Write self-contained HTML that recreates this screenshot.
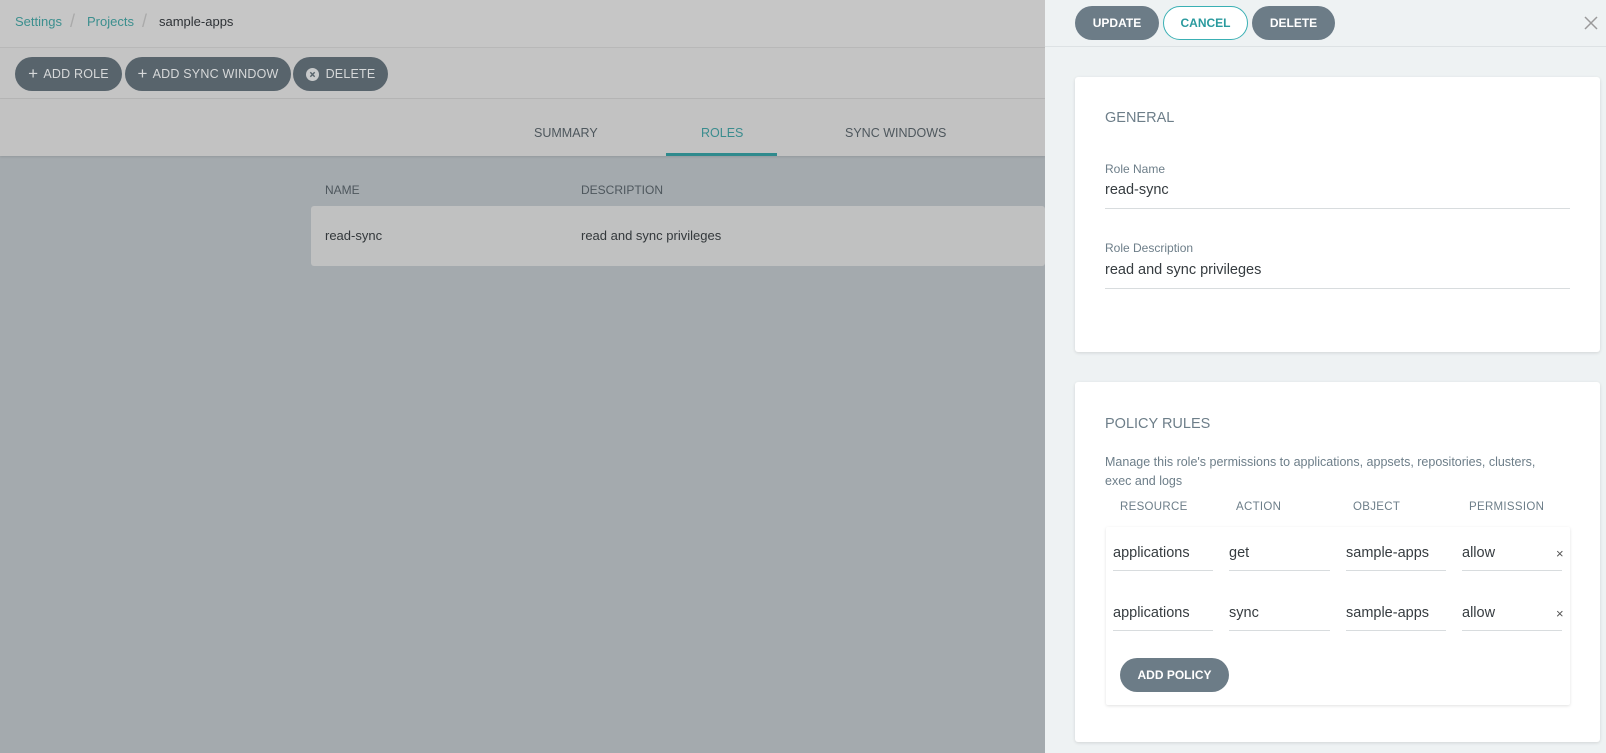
<!DOCTYPE html>
<html><head><meta charset="utf-8"><style>
*{box-sizing:border-box;margin:0;padding:0}
body{width:1606px;height:753px;overflow:hidden;position:relative;font-family:"Liberation Sans",sans-serif;background:#a4aaae}
.a{position:absolute;white-space:nowrap}
.btn{position:absolute;border-radius:17px;background:#58646c;color:#d6d8d9;font-size:12.5px;display:flex;align-items:center;justify-content:center;letter-spacing:.2px}
.rb{position:absolute;border-radius:17px;background:#6c7c87;color:#fff;font-size:12px;display:flex;align-items:center;justify-content:center;font-weight:bold}
.card{position:absolute;background:#fff;box-shadow:0 1px 3px rgba(0,0,0,.12);border-radius:3px}
.lbl{color:#6d7e89;font-size:12px}
.val{color:#363c40;font-size:14.5px}
.line{position:absolute;height:1px;background:#d8dcde}
.ch{position:absolute;font-size:11.5px;color:#6d7e89;letter-spacing:.3px}
</style></head><body>
<div class="a" style="left:0;top:0;width:1045px;height:47px;background:#c6c6c6"></div>
<div class="a" style="left:0;top:47px;width:1045px;height:1px;background:#b8b8b8"></div>
<div class="a" style="left:0;top:48px;width:1045px;height:50px;background:#c4c4c4"></div>
<div class="a" style="left:0;top:98px;width:1045px;height:1px;background:#b6b6b6"></div>
<div class="a" style="left:0;top:99px;width:1045px;height:57px;background:#c2c2c2;box-shadow:0 1px 2px rgba(0,0,0,.1)"></div>
<div class="a" style="left:15px;top:14px;font-size:13px;color:#3c8f8e">Settings</div>
<div class="a" style="left:70px;top:11px;font-size:18px;color:#aaa">/</div>
<div class="a" style="left:87px;top:14px;font-size:13px;color:#3c8f8e">Projects</div>
<div class="a" style="left:142px;top:11px;font-size:18px;color:#aaa">/</div>
<div class="a" style="left:159px;top:14px;font-size:13px;color:#2e3236">sample-apps</div>
<div class="btn" style="left:15px;top:57px;width:107px;height:34px"><span style="font-size:17px;margin-right:5px">+</span>ADD ROLE</div>
<div class="btn" style="left:125px;top:57px;width:166px;height:34px"><span style="font-size:17px;margin-right:5px">+</span>ADD SYNC WINDOW</div>
<div class="btn" style="left:293px;top:57px;width:95px;height:34px"><svg width="13" height="13" viewBox="0 0 13 13" style="margin-right:7px"><circle cx="6.5" cy="6.5" r="6.5" fill="#c8cacb"/><path d="M4.3 4.3l4.4 4.4M8.7 4.3l-4.4 4.4" stroke="#58646c" stroke-width="1.4"/></svg>DELETE</div>
<div class="a" style="left:534px;top:126px;font-size:12.5px;color:#4e575d">SUMMARY</div>
<div class="a" style="left:701px;top:126px;font-size:12.5px;color:#3a8c8e">ROLES</div>
<div class="a" style="left:845px;top:126px;font-size:12.5px;color:#4e575d">SYNC WINDOWS</div>
<div class="a" style="left:666px;top:153px;width:111px;height:3px;background:#2f8a8d"></div>
<div class="a" style="left:325px;top:183px;font-size:12px;color:#4e575d">NAME</div>
<div class="a" style="left:581px;top:183px;font-size:12px;color:#4e575d">DESCRIPTION</div>
<div class="a" style="left:311px;top:206px;width:734px;height:60px;background:#c0c1c1;border-radius:3px"></div>
<div class="a" style="left:325px;top:228px;font-size:13px;color:#33383b">read-sync</div>
<div class="a" style="left:581px;top:228px;font-size:13px;color:#33383b">read and sync privileges</div>

<div class="a" style="left:1045px;top:0;width:561px;height:753px;background:#eef2f3"></div>
<div class="a" style="left:1045px;top:46px;width:561px;height:1px;background:#dde2e4"></div>
<div class="rb" style="left:1075px;top:6px;width:84px;height:34px">UPDATE</div>
<div class="rb" style="left:1163px;top:6px;width:85px;height:34px;background:#fff;border:1px solid #3ab0b4;color:#2a9a9e">CANCEL</div>
<div class="rb" style="left:1252px;top:6px;width:83px;height:34px">DELETE</div>
<svg class="a" style="left:1584px;top:16px" width="14" height="14" viewBox="0 0 14 14"><path d="M1 1l12 12M13 1L1 13" stroke="#9a9a9a" stroke-width="1.5"/></svg>

<div class="card" style="left:1075px;top:77px;width:525px;height:275px"></div>
<div class="a" style="left:1105px;top:110px;font-size:14.5px;color:#6d7e89">GENERAL</div>
<div class="a lbl" style="left:1105px;top:162px">Role Name</div>
<div class="a val" style="left:1105px;top:182px">read-sync</div>
<div class="line" style="left:1105px;top:208px;width:465px"></div>
<div class="a lbl" style="left:1105px;top:241px">Role Description</div>
<div class="a val" style="left:1105px;top:262px">read and sync privileges</div>
<div class="line" style="left:1105px;top:288px;width:465px"></div>

<div class="card" style="left:1075px;top:382px;width:525px;height:360px"></div>
<div class="a" style="left:1105px;top:416px;font-size:14.5px;color:#6d7e89">POLICY RULES</div>
<div class="a" style="left:1105px;top:453px;font-size:12.5px;color:#6d7e89;line-height:18.5px;white-space:normal;width:460px">Manage this role's permissions to applications, appsets, repositories, clusters, exec and logs</div>
<div class="ch" style="left:1120px;top:501px">RESOURCE</div>
<div class="ch" style="left:1236px;top:501px">ACTION</div>
<div class="ch" style="left:1353px;top:501px">OBJECT</div>
<div class="ch" style="left:1469px;top:501px">PERMISSION</div>
<div class="card" style="left:1106px;top:527px;width:464px;height:178px;border-radius:2px"></div>
<div class="a val" style="left:1113px;top:545px">applications</div>
<div class="a val" style="left:1229px;top:545px">get</div>
<div class="a val" style="left:1346px;top:545px;width:98px;overflow:hidden">sample-apps</div>
<div class="a val" style="left:1462px;top:545px">allow</div>
<div class="a" style="left:1556px;top:546px;font-size:13px;color:#555">×</div>
<div class="line" style="left:1113px;top:570px;width:100px"></div>
<div class="line" style="left:1229px;top:570px;width:101px"></div>
<div class="line" style="left:1346px;top:570px;width:100px"></div>
<div class="line" style="left:1462px;top:570px;width:100px"></div>
<div class="a val" style="left:1113px;top:605px">applications</div>
<div class="a val" style="left:1229px;top:605px">sync</div>
<div class="a val" style="left:1346px;top:605px;width:98px;overflow:hidden">sample-apps</div>
<div class="a val" style="left:1462px;top:605px">allow</div>
<div class="a" style="left:1556px;top:606px;font-size:13px;color:#555">×</div>
<div class="line" style="left:1113px;top:630px;width:100px"></div>
<div class="line" style="left:1229px;top:630px;width:101px"></div>
<div class="line" style="left:1346px;top:630px;width:100px"></div>
<div class="line" style="left:1462px;top:630px;width:100px"></div>
<div class="rb" style="left:1120px;top:658px;width:109px;height:34px">ADD POLICY</div>
</body></html>
